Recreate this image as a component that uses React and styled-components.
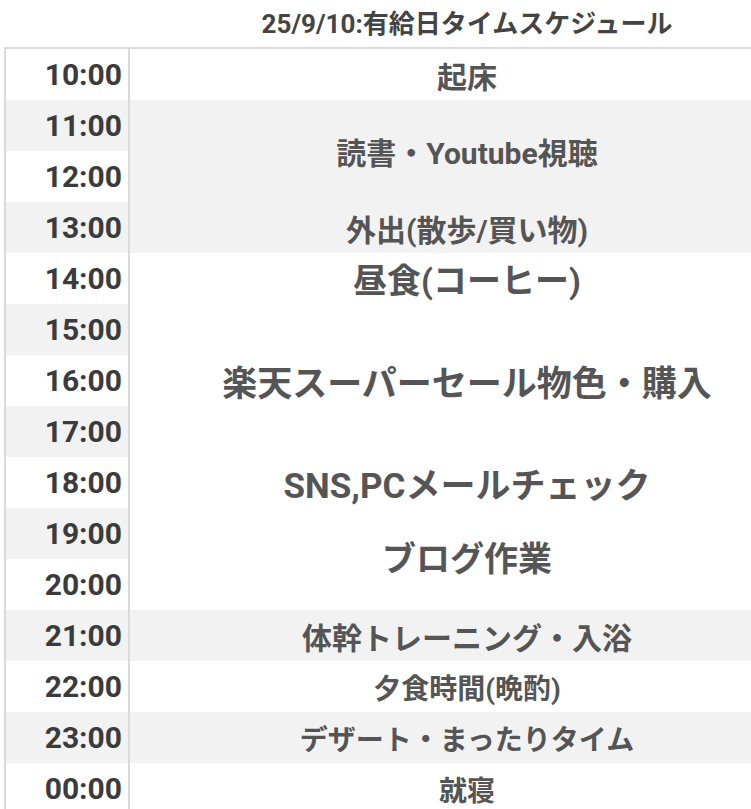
import styled, { createGlobalStyle } from 'styled-components';

const GlobalStyle = createGlobalStyle`
  html, body {
    margin: 0;
    padding: 0;
    overflow: hidden;
    background: #fff;
  }
  body {
    font-family: Roboto, "Noto Sans CJK JP", sans-serif;
  }
`;

const ROW = 51;

const Table = styled.div`
  display: grid;
  grid-template-columns: 126px 674px;
  grid-template-rows: 49px;
  grid-auto-rows: ${ROW}px;
  width: 800px;
  margin-left: 4px;
`;

const Corner = styled.div`
  grid-column: 1;
  grid-row: 1;
  border-bottom: 2px solid #dadada;
`;

const Title = styled.div`
  grid-column: 2;
  grid-row: 1;
  display: flex;
  align-items: center;
  justify-content: center;
  padding-bottom: 5px;
  border-bottom: 2px solid #dadada;
  font-size: 26px;
  font-weight: 700;
  color: #444;
`;

const Time = styled.div`
  grid-column: 1;
  grid-row: ${(p) => p.$row};
  display: flex;
  align-items: center;
  justify-content: flex-end;
  padding-right: 6px;
  border-left: 2px solid #dadada;
  border-right: 2px solid #dadada;
  background: ${(p) => (p.$grey ? '#f2f2f2' : '#fff')};
  font-size: 30px;
  font-weight: 700;
  color: #3b3b3b;
`;

const Task = styled.div`
  grid-column: 2;
  grid-row: ${(p) => p.$row} / span ${(p) => p.$span || 1};
  display: flex;
  flex-direction: column;
  align-items: center;
  justify-content: ${(p) => (p.$stack ? 'flex-start' : 'center')};
  background: ${(p) => (p.$grey ? '#f2f2f2' : '#fff')};
  font-size: ${(p) => p.$size || 30}px;
  font-weight: 700;
  color: #555;
  white-space: nowrap;
`;

const Line = styled.div`
  height: ${ROW}px;
  margin-top: ${(p) => p.$top || 0}px;
  display: flex;
  align-items: center;
  font-size: ${(p) => p.$size}px;
`;

const TIMES = [
  '10:00', '11:00', '12:00', '13:00', '14:00', '15:00', '16:00', '17:00',
  '18:00', '19:00', '20:00', '21:00', '22:00', '23:00', '00:00',
];

const TASKS = [
  { at: 0, text: '起床', size: 30 },
  { at: 1, span: 2, text: '読書・Youtube視聴', size: 30 },
  { at: 3, text: '外出(散歩/買い物)', size: 30 },
  {
    at: 4,
    span: 7,
    lines: [
      { text: '昼食(コーヒー)', size: 34, top: 0 },
      { text: '楽天スーパーセール物色・購入', size: 35, top: 51 },
      { text: 'SNS,PCメールチェック', size: 35, top: 51 },
      { text: 'ブログ作業', size: 34, top: 23 },
    ],
  },
  { at: 11, text: '体幹トレーニング・入浴', size: 30 },
  { at: 12, text: '夕食時間(晩酌)', size: 28 },
  { at: 13, text: 'デザート・まったりタイム', size: 28 },
  { at: 14, text: '就寝', size: 28 },
];

export default function App() {
  return (
    <>
      <GlobalStyle />
      <Table>
        <Corner />
        <Title>25/9/10:有給日タイムスケジュール</Title>
        {TIMES.map((t, i) => (
          <Time key={t} $row={i + 2} $grey={i % 2 === 1}>
            {t}
          </Time>
        ))}
        {TASKS.map((task) => (
          <Task
            key={task.at}
            $row={task.at + 2}
            $span={task.span}
            $grey={task.at % 2 === 1}
            $size={task.size}
            $stack={!!task.lines}
          >
            {task.lines
              ? task.lines.map((l) => (
                  <Line key={l.text} $size={l.size} $top={l.top}>
                    {l.text}
                  </Line>
                ))
              : task.text}
          </Task>
        ))}
      </Table>
    </>
  );
}
